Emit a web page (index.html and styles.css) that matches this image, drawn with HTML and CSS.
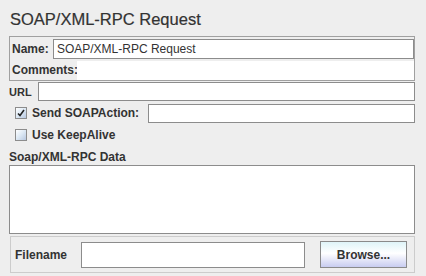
FILE: index.html
```html
<!DOCTYPE html>
<html lang="en">
<head>
    <meta charset="UTF-8">
    <title>SOAP/XML-RPC Request</title>
    <link rel="stylesheet" href="styles.css">
</head>
<body>

    <div class="page">
        <h1 class="title">SOAP/XML-RPC Request</h1>

        <div class="name-panel">
            <div class="name-row">
                <label class="lbl">Name:</label>
                <div class="field name-field">SOAP/XML-RPC Request</div>
            </div>
            <div class="comments-row">
                <label class="lbl">Comments:</label>
                <div class="comments-area"></div>
            </div>
        </div>

        <div class="url-row">
            <label class="lbl">URL</label>
            <div class="field url-field"></div>
        </div>

        <div class="check-row soap-row">
            <span class="check checked">
                <svg width="8" height="8" viewBox="0 0 8 8"><path d="M1 4.5 L3 6.5 L7 1" fill="none" stroke="#222" stroke-width="1.6"/></svg>
            </span>
            <label class="lbl">Send SOAPAction:</label>
            <div class="field action-field"></div>
        </div>

        <div class="check-row keep-row">
            <span class="check"></span>
            <label class="lbl">Use KeepAlive</label>
        </div>

        <div class="data-label lbl">Soap/XML-RPC Data</div>
        <div class="data-area"></div>

        <div class="file-panel">
            <label class="lbl">Filename</label>
            <div class="field file-field"></div>
            <button class="browse-btn">Browse...</button>
        </div>
    </div>

</body>
</html>
```

FILE: styles.css
```css
body {
    margin: 0;
    background-color: #eeeeee;
    font-family: "Liberation Sans", Arial, sans-serif;
    color: #333333;
}
.page {
    display: flex;
    flex-direction: column;
    width: 406px;
    padding-left: 9px;
}
.title {
    height: 36px;
    margin: 0;
    padding: 8px 0 0 1px;
    box-sizing: border-box;
    font-size: 16.5px;
    font-weight: normal;
    line-height: 22px;
    color: #333333;
    -webkit-text-stroke: 0.2px #333333;
}
.lbl {
    font-size: 12px;
    font-weight: bold;
    color: #333333;
}
.field {
    background: white;
    border: 1px solid #8c8c8c;
    box-sizing: border-box;
}
.name-panel {
    height: 45px;
    border: 1px solid #a0a0a0;
    box-sizing: border-box;
    display: flex;
    flex-direction: column;
}
.name-row {
    display: flex;
    align-items: center;
    height: 23px;
    padding-left: 2px;
}
.name-row .lbl {
    width: 41px;
}
.name-field {
    width: 362px;
    height: 20px;
    margin-top: 1px;
    padding-left: 3px;
    font-size: 12px;
    line-height: 18px;
}
.comments-row {
    display: flex;
    align-items: center;
    flex: 1;
    padding-left: 2px;
}
.comments-row .lbl {
    width: 65px;
}
.comments-area {
    flex: 1;
    align-self: stretch;
    margin-top: 1px;
    background: white;
}
.url-row {
    display: flex;
    align-items: center;
    height: 19px;
    margin-top: 1px;
}
.url-row .lbl {
    width: 29px;
    font-size: 11px;
}
.url-field {
    flex: 1;
    height: 19px;
}
.check-row {
    display: flex;
    align-items: center;
    padding-left: 6px;
}
.soap-row {
    height: 20px;
    margin-top: 2px;
}
.keep-row {
    height: 14px;
    margin-top: 5px;
}
.check {
    width: 12px;
    height: 12px;
    box-sizing: border-box;
    border: 1px solid #8c8c8c;
    background: linear-gradient(135deg, #ffffff 0%, #dce8f4 50%, #b8c8e0 100%);
    margin-right: 5px;
    display: flex;
    align-items: center;
    justify-content: center;
}
.soap-row .lbl {
    width: 116px;
}
.action-field {
    flex: 1;
    height: 19px;
}
.data-label {
    margin-top: 8px;
    height: 15px;
    line-height: 15px;
}
.data-area {
    height: 69px;
    background: white;
    border: 1px solid #8c8c8c;
    box-sizing: border-box;
}
.file-panel {
    display: flex;
    align-items: center;
    height: 37px;
    margin: 2px 0 0 1px;
    border: 1px solid #cccccc;
    box-sizing: border-box;
    padding-left: 4px;
}
.file-panel .lbl {
    width: 66px;
}
.file-field {
    width: 224px;
    height: 26px;
}
.browse-btn {
    width: 87px;
    height: 27px;
    margin-left: 15px;
    border: 1px solid #8a8a8a;
    background: linear-gradient(to bottom, #dff4f8 0%, #ffffff 45%, #c8ccf0 100%);
    font-family: "Liberation Sans", Arial, sans-serif;
    font-size: 12px;
    font-weight: bold;
    color: #333333;
    padding: 0;
}
```
